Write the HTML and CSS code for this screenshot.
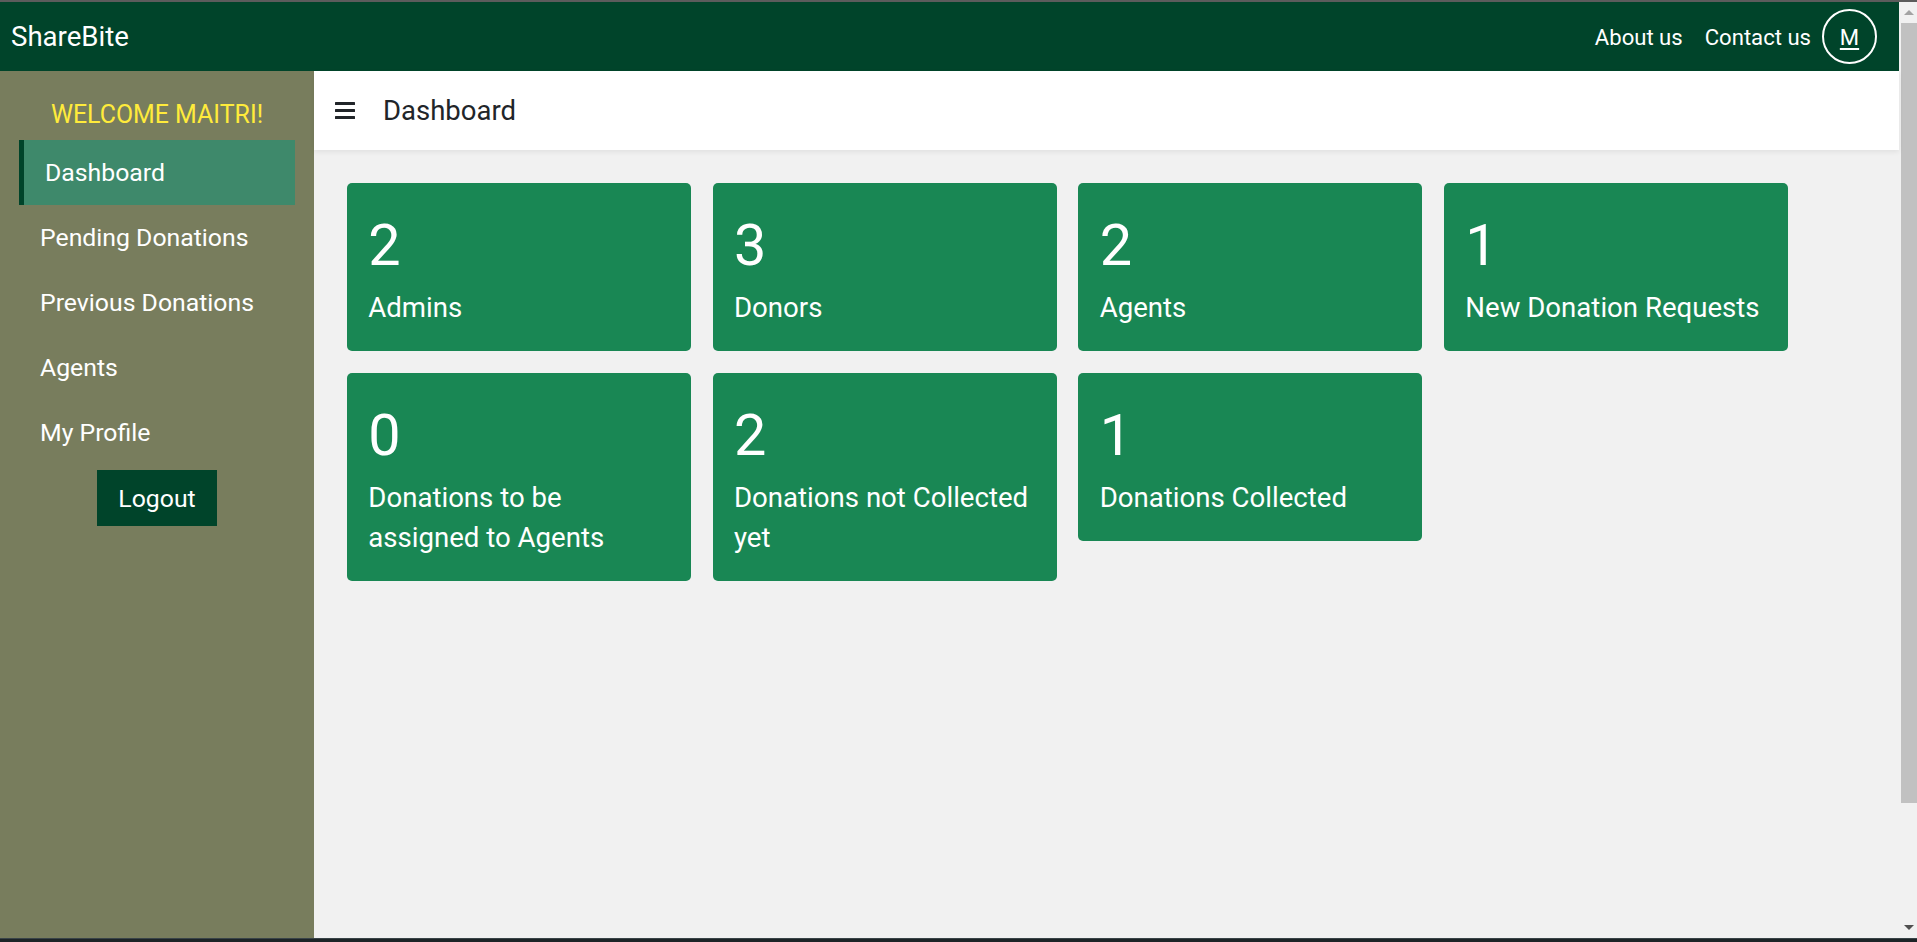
FILE: index.html
```html
<!DOCTYPE html>
<html lang="en">
<head>
<meta charset="utf-8">
<title>ShareBite - Dashboard</title>
<link rel="stylesheet" href="styles.css">
</head>
<body>
<div class="frame">
  <div class="window">
    <div class="app">
      <nav class="topnav">
        <a class="brand" href="#">ShareBite</a>
        <div class="nav-right">
          <a class="nav-link" href="#">About us</a>
          <a class="nav-link" href="#">Contact us</a>
          <a class="avatar" href="#"><span>M</span></a>
        </div>
      </nav>
      <div class="main">
        <aside class="sidebar">
          <div class="welcome">WELCOME MAITRI!</div>
          <ul class="menu">
            <li class="menu-item active">Dashboard</li>
            <li class="menu-item">Pending Donations</li>
            <li class="menu-item">Previous Donations</li>
            <li class="menu-item">Agents</li>
            <li class="menu-item">My Profile</li>
          </ul>
          <button class="logout" type="button">Logout</button>
        </aside>
        <section class="content">
          <header class="page-header">
            <svg class="hamburger" width="20" height="17" viewBox="0 0 20 17" aria-hidden="true">
              <rect x="0" y="0" width="20" height="3" rx="0.5"></rect>
              <rect x="0" y="7" width="20" height="3" rx="0.5"></rect>
              <rect x="0" y="14" width="20" height="3" rx="0.5"></rect>
            </svg>
            <h1 class="page-title">Dashboard</h1>
          </header>
          <div class="cards">
            <div class="card"><div class="num">2</div><div class="label">Admins</div></div>
            <div class="card"><div class="num">3</div><div class="label">Donors</div></div>
            <div class="card"><div class="num">2</div><div class="label">Agents</div></div>
            <div class="card"><div class="num">1</div><div class="label">New Donation Requests</div></div>
            <div class="card"><div class="num">0</div><div class="label">Donations to be assigned to Agents</div></div>
            <div class="card"><div class="num">2</div><div class="label">Donations not Collected yet</div></div>
            <div class="card"><div class="num">1</div><div class="label">Donations Collected</div></div>
          </div>
        </section>
      </div>
    </div>
    <div class="scrollbar" aria-hidden="true">
      <div class="sb-btn"><span class="sb-arrow up"></span></div>
      <div class="sb-track"><div class="sb-thumb"></div></div>
      <div class="sb-btn"><span class="sb-arrow down"></span></div>
    </div>
  </div>
  <div class="bottom-edge"></div>
</div>
</body>
</html>
```

FILE: styles.css
```css
* {
  box-sizing: border-box;
}

html, body {
  margin: 0;
  padding: 0;
  height: 100%;
  overflow: hidden;
}

body {
  font-family: Roboto, "Liberation Sans", Arial, sans-serif;
  background: #f1f1f1;
}

.frame {
  height: 942px;
  display: flex;
  flex-direction: column;
  border-top: 2px solid #5c5c5c;
}

.window {
  flex: 1;
  display: flex;
  min-height: 0;
}

.app {
  flex: 1;
  display: flex;
  flex-direction: column;
  min-width: 0;
}

/* Top navbar */
.topnav {
  height: 69px;
  flex: none;
  background: #00442a;
  display: flex;
  align-items: center;
  justify-content: space-between;
  padding: 0 22px 0 11px;
}

.brand {
  color: #ffffff;
  text-decoration: none;
  font-size: 27.6px;
  line-height: 1;
}

.nav-right {
  display: flex;
  align-items: center;
}

.nav-link {
  color: #ffffff;
  text-decoration: none;
  font-size: 22.1px;
  padding: 0 11px;
}

.avatar {
  width: 55px;
  height: 55px;
  border: 2px solid #ffffff;
  border-radius: 50%;
  display: flex;
  align-items: center;
  justify-content: center;
  color: #ffffff;
  font-size: 22.1px;
  text-decoration: underline;
  text-underline-offset: 3px;
}

/* Main area */
.main {
  flex: 1;
  display: flex;
  min-height: 0;
}

.sidebar {
  width: 314px;
  flex: none;
  background: #787d5d;
  display: flex;
  flex-direction: column;
  align-items: center;
  padding-top: 26px;
}

.welcome {
  color: #ffeb3b;
  font-size: 24.9px;
  line-height: 36px;
  margin-bottom: 7px;
}

.menu {
  list-style: none;
  padding: 0;
  align-self: stretch;
  margin: 0 19px;
}

.menu-item {
  height: 65px;
  line-height: 65px;
  font-size: 24.8px;
  color: #ffffff;
  padding-left: 21px;
}

.menu-item.active {
  background: #3e896b;
  border-left: 5px solid #00442a;
}

.logout {
  margin-top: 5px;
  width: 120px;
  height: 56px;
  background: #00442a;
  color: #ffffff;
  border: none;
  font-family: inherit;
  font-size: 24.8px;
  padding: 0;
}

/* Content */
.content {
  flex: 1;
  background: #f1f1f1;
  min-width: 0;
}

.page-header {
  height: 79px;
  background: #ffffff;
  display: flex;
  align-items: center;
  padding-left: 21px;
  box-shadow: 0 2px 5px rgba(0, 0, 0, 0.07);
  position: relative;
}

.hamburger {
  fill: #212529;
  flex: none;
}

.page-title {
  margin: 0 0 0 28px;
  font-size: 27.5px;
  font-weight: 400;
  color: #212529;
}

.cards {
  display: grid;
  grid-template-columns: repeat(4, 344px);
  column-gap: 21.7px;
  row-gap: 22px;
  align-items: start;
  padding: 33px 0 0 33px;
}

.card {
  background: #198754;
  border-radius: 5px;
  color: #ffffff;
  padding: 29px 21.3px 23px;
}

.num {
  font-size: 57.6px;
  line-height: 67px;
  margin-bottom: 9px;
}

.label {
  font-size: 27.6px;
  line-height: 40px;
}

/* Window scrollbar */
.scrollbar {
  width: 18px;
  flex: none;
  background: #f1f1f1;
  display: flex;
  flex-direction: column;
}

.sb-btn {
  height: 21px;
  flex: none;
  display: flex;
  align-items: center;
  justify-content: center;
  padding-left: 2px;
}

.sb-arrow {
  width: 0;
  height: 0;
  border-left: 5px solid transparent;
  border-right: 5px solid transparent;
}

.sb-arrow.up {
  border-bottom: 5px solid #a3a3a3;
}

.sb-arrow.down {
  border-top: 5px solid #505050;
}

.sb-track {
  flex: 1;
  padding-left: 2px;
}

.sb-thumb {
  height: 780px;
  background: #c1c1c1;
}

.bottom-edge {
  height: 4px;
  flex: none;
  background: #1c2326;
  border-top: 1px solid #3a4448;
}
```
